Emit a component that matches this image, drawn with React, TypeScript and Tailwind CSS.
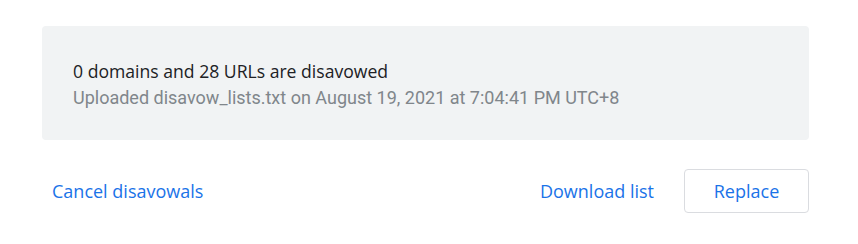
export default function App() {
  return (
    <div className="w-[858px] h-[244px] bg-white pl-[42px] pr-[49px] pt-[26px]" style={{ fontFamily: 'Roboto, "Liberation Sans", sans-serif' }}>
      <div className="h-[114px] rounded-[4px] bg-[#f1f3f4] pl-[31px] flex flex-col justify-center pt-[3px]">
        <div className="text-[17.6px] leading-[24px] font-medium text-[#202124]" style={{ fontFamily: '"Open Sans", sans-serif' }}>
          0 domains and 28 URLs are disavowed
        </div>
        <div className="text-[18px] leading-[26px] text-[#80868b] mt-[2px]">
          Uploaded disavow_lists.txt on August 19, 2021 at 7:04:41 PM UTC+8
        </div>
      </div>
      <div className="flex items-center justify-between mt-[29px]" style={{ fontFamily: '"Open Sans", sans-serif' }}>
        <button className="text-[18px] font-medium text-[#1a73e8] px-[10px] h-[44px]">Cancel disavowals</button>
        <div className="flex items-center gap-[20px]">
          <button className="text-[18px] font-medium text-[#1a73e8] px-[10px] h-[44px]">Download list</button>
          <button className="text-[18px] font-medium text-[#1a73e8] w-[125px] h-[44px] rounded-[4px] border border-[#dadce0]">Replace</button>
        </div>
      </div>
    </div>
  );
}
